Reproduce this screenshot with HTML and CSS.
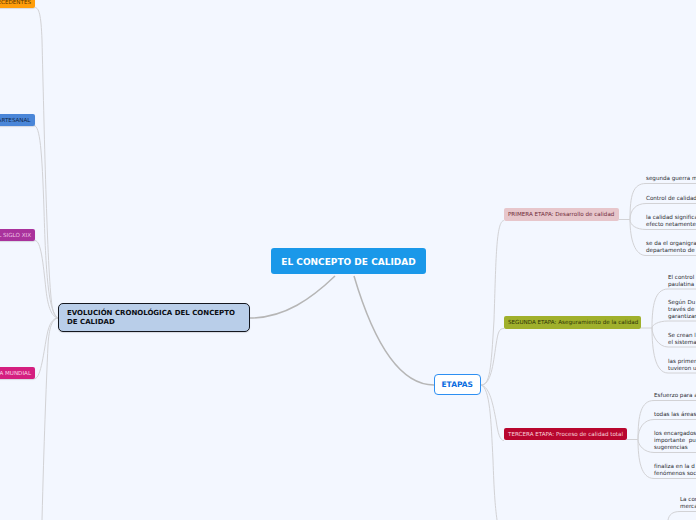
FILE: index.html
```html
<!DOCTYPE html>
<html lang="es">
<head>
<meta charset="utf-8">
<title>EL CONCEPTO DE CALIDAD</title>
<link rel="stylesheet" href="styles.css">
</head>
<body>
<main class="map">
<svg class="links" width="696" height="520" viewBox="0 0 696 520" fill="none">
  <g class="thin">
    <path d="M35 7.500C39 8 41 14 42 40C44 120 47 270 52 306Q54 317 58 318"/>
    <path d="M34 125.500C40 126 42 150 44 210C46 280 49 312 58 318"/>
    <path d="M35 240.500C41 241 43 262 46 290C48 308 52 317 58 318"/>
    <path d="M35 378.500C41 378 44 350 47 335C49 324 53 318 58 318"/>
    <path d="M42 520C44 440 46 390 48 345C49 328 52 319 58 318"/>
    <path d="M481 385C490 385 491 370 494 320C496 260 496 221 504 220.500"/>
    <path d="M481 385C491 385 493 365 496 345C498 332 499 328.500 504 328.500"/>
    <path d="M481 385C490 387 493 405 496 420C498 434 500 440.500 504 440.500"/>
    <path d="M481 385C490 388 491 420 493 460C494 490 495 505 497 520"/>
    <path d="M619 219.500H630"/>
    <path d="M630 219.500C630 195 633 183.500 646 183.500H696"/>
    <path d="M630 219.500C630 210 636 203.500 646 203.500H696"/>
    <path d="M630 219.500C630 225 636 229.500 646 229.500H696"/>
    <path d="M630 219.500C630 240 635 255.500 646 255.500H696"/>
    <path d="M641 328H652"/>
    <path d="M652 328C652 305 655 289 668 289H696"/>
    <path d="M652 328C652 325 658 321 668 321H696"/>
    <path d="M652 328C652 335 658 347 668 347H696"/>
    <path d="M652 328C652 350 655 373 668 373H696"/>
    <path d="M627 439.500H638"/>
    <path d="M638 439.500C638 415 641 400.500 654 400.500H696"/>
    <path d="M638 439.500C638 428 644 419.500 654 419.500H696"/>
    <path d="M638 439.500C638 445 644 452.500 654 452.500H696"/>
    <path d="M638 439.500C638 460 641 478.500 654 478.500H696"/>
    <path d="M668 520C669 515 672 511.500 680 511.500H696"/>
  </g>
  <g class="thick">
    <path d="M250 318C285 318 312 298 335 276"/>
    <path d="M354 276C370 330 395 385 434 385"/>
  </g>
</svg>

<h1 class="node root">EL CONCEPTO DE CALIDAD</h1>
<div class="node evolucion">EVOLUCIÓN CRONOLÓGICA DEL CONCEPTO DE CALIDAD</div>
<div class="node etapas">ETAPAS</div>

<div class="node tag antecedentes">ANTECEDENTES</div>
<div class="node tag artesanal">ETAPA ARTESANAL</div>
<div class="node tag siglo">EL SIGLO XIX</div>
<div class="node tag mundial">PRIMERA GUERRA MUNDIAL</div>

<div class="node stage primera">PRIMERA ETAPA: Desarrollo de calidad</div>
<div class="node stage segunda">SEGUNDA ETAPA: Aseguramiento de la calidad</div>
<div class="node stage tercera">TERCERA ETAPA: Proceso de calidad total</div>

<p class="leaf a1">segunda guerra mundial</p>
<p class="leaf a2">Control de calidad</p>
<p class="leaf a3">la calidad significa un<br>efecto netamente</p>
<p class="leaf a4">se da el organigrama<br>departamento de</p>

<p class="leaf b1">El control<br>paulatina</p>
<p class="leaf b2">Según Du<br>través de<br>garantizar</p>
<p class="leaf b3">Se crean l<br>el sistema</p>
<p class="leaf b4">las primer<br>tuvieron u</p>

<p class="leaf c1">Esfuerzo para a</p>
<p class="leaf c2">todas las áreas</p>
<p class="leaf c3">los encargados<br>importante  pu<br>sugerencias</p>
<p class="leaf c4">finaliza en la d<br>fenómenos soc</p>

<p class="leaf d1">La cor<br>merca</p>
</main>
</body>
</html>
```
FILE: styles.css
```css
html, body {
  margin: 0;
  padding: 0;
  background: #f3f7ff;
  overflow: hidden;
}
.map {
  position: relative;
  width: 696px;
  height: 520px;
  overflow: hidden;
  font-family: "DejaVu Sans", sans-serif;
}
.links {
  position: absolute;
  left: 0;
  top: 0;
}
.thin path {
  stroke: #d2d2d5;
  stroke-width: 1;
}
.thick path {
  stroke: #b6b6b6;
  stroke-width: 1.5;
}
.node {
  position: absolute;
  box-sizing: border-box;
  margin: 0;
  white-space: nowrap;
}
.root {
  left: 271px;
  top: 248px;
  width: 155px;
  height: 26px;
  border-radius: 3px;
  background: #1a98e9;
  color: #fff;
  font-size: 9px;
  font-weight: 700;
  line-height: 28px;
  text-align: center;
}
.evolucion {
  left: 58px;
  top: 303px;
  width: 192px;
  height: 29px;
  padding: 5px 4px 0 8px;
  border: 1px solid #14171f;
  border-radius: 5px;
  background: #b9cee9;
  color: #0b0d12;
  font-size: 7px;
  font-weight: 700;
  line-height: 9px;
  white-space: normal;
  box-shadow: 0 1px 1px rgba(0, 0, 0, .12);
}
.etapas {
  left: 433.500px;
  top: 374px;
  width: 47.500px;
  height: 21px;
  border: 1px solid #2d8ff2;
  border-radius: 4px;
  background: #fff;
  color: #0a6ce0;
  font-size: 7.500px;
  font-weight: 700;
  line-height: 19px;
  text-align: center;
}
.tag {
  height: 12px;
  padding: 0 4px;
  border-radius: 2px;
  font-size: 5.600px;
  line-height: 13px;
  box-shadow: 0 1px 1px rgba(0, 0, 0, .12);
}
.antecedentes {
  right: 661px;
  top: -4px;
  background: #ff9d0a;
  color: #5a3200;
}
.artesanal {
  right: 661.500px;
  top: 114px;
  background: #4a86d8;
  color: #10264a;
}
.siglo {
  right: 661px;
  top: 229px;
  background: #a9329c;
  color: #eec4e6;
}
.mundial {
  right: 661px;
  top: 366.500px;
  background: #d41f80;
  color: #fbd3e6;
}
.stage {
  left: 504px;
  height: 12.500px;
  padding: 0 4px;
  border-radius: 2px;
  font-size: 5.600px;
  line-height: 13px;
}
.primera {
  top: 208px;
  width: 115px;
  background: #e7c6cb;
  color: #6e2a38;
}
.segunda {
  top: 316px;
  width: 137px;
  background: #a0b02c;
  color: #2c3308;
}
.tercera {
  top: 427.500px;
  width: 123px;
  background: #b8062e;
  color: #f8d5dc;
}
.leaf {
  position: absolute;
  margin: 0;
  color: #2a2a30;
  font-size: 5.600px;
  line-height: 7px;
  white-space: pre;
}
.a1 { left: 646px; top: 175px; }
.a2 { left: 646px; top: 195px; }
.a3 { left: 646px; top: 214px; }
.a4 { left: 646px; top: 240px; }
.b1 { left: 668px; top: 274px; }
.b2 { left: 668px; top: 299px; }
.b3 { left: 668px; top: 332px; }
.b4 { left: 668px; top: 358px; }
.c1 { left: 654px; top: 392px; }
.c2 { left: 654px; top: 411px; }
.c3 { left: 654px; top: 430px; }
.c4 { left: 654px; top: 463px; }
.d1 { left: 680px; top: 496px; }
```
